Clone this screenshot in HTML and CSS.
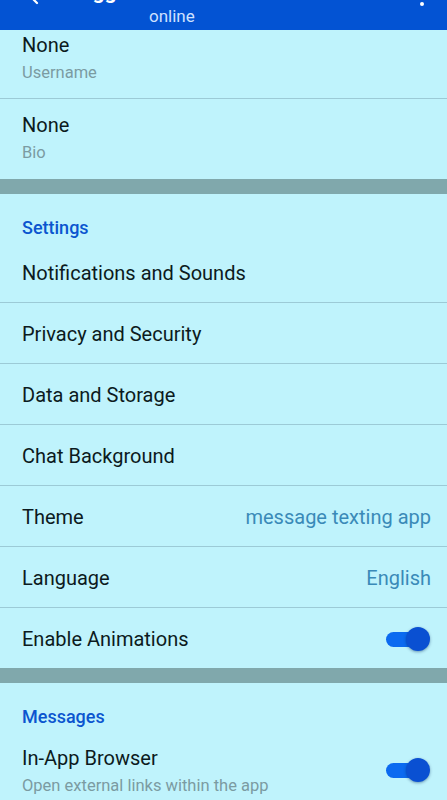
FILE: index.html
```html
<!DOCTYPE html>
<html lang="en">
<head>
<meta charset="utf-8">
<title>Settings</title>
<link rel="stylesheet" href="styles.css">
</head>
<body>
<header class="appbar">
  <div class="bar">
    <button class="icon-btn back" aria-label="Back">
      <svg width="24" height="24" viewBox="0 0 24 24"><path d="M15 4 L7 12 L15 20" fill="none" stroke="#ffffff" stroke-width="2.2" stroke-linecap="round" stroke-linejoin="round"/></svg>
    </button>
    <div class="titles">
      <div class="title">Maggie</div>
      <div class="subtitle">online</div>
    </div>
    <button class="icon-btn more" aria-label="More">
      <span class="dot"></span><span class="dot"></span><span class="dot"></span>
    </button>
  </div>
</header>

<main class="list">
  <section class="group">
    <div class="item two-line first">
      <div class="item-title">None</div>
      <div class="item-sub">Username</div>
    </div>
    <div class="item two-line last">
      <div class="item-title">None</div>
      <div class="item-sub">Bio</div>
    </div>
  </section>

  <div class="band"></div>

  <section class="group">
    <h2 class="group-title">Settings</h2>
    <div class="item"><span class="item-title">Notifications and Sounds</span></div>
    <div class="item"><span class="item-title">Privacy and Security</span></div>
    <div class="item"><span class="item-title">Data and Storage</span></div>
    <div class="item"><span class="item-title">Chat Background</span></div>
    <div class="item"><span class="item-title">Theme</span><span class="item-value">message texting app</span></div>
    <div class="item"><span class="item-title">Language</span><span class="item-value">English</span></div>
    <div class="item last"><span class="item-title">Enable Animations</span><span class="switch on"><span class="knob"></span></span></div>
  </section>

  <div class="band"></div>

  <section class="group">
    <h2 class="group-title">Messages</h2>
    <div class="item two-line with-switch last">
      <div class="texts">
        <div class="item-title">In-App Browser</div>
        <div class="item-sub">Open external links within the app</div>
      </div>
      <span class="switch on"><span class="knob"></span></span>
    </div>
  </section>
</main>
</body>
</html>
```

FILE: styles.css
```css
* { box-sizing: border-box; }
html, body {
  margin: 0;
  padding: 0;
  background: #bff3fc;
  font-family: Roboto, "Noto Sans", "Liberation Sans", sans-serif;
  color: #0c1a20;
  overflow: hidden;
}

.appbar {
  height: 30px;
  overflow: hidden;
  background: #0353d3;
}
.bar {
  height: 56px;
  margin-top: -26px;
  display: flex;
  align-items: center;
}
.icon-btn {
  border: 0;
  background: none;
  padding: 0;
  display: flex;
  align-items: center;
  justify-content: center;
}
.back {
  width: 24px;
  height: 24px;
  margin-left: 22px;
  margin-top: -14px;
}
.titles {
  flex: 1;
  display: flex;
  flex-direction: column;
  align-items: flex-start;
  padding-left: 103px;
  margin-top: 4px;
}
.title {
  color: #ffffff;
  font-size: 21px;
  font-weight: 700;
  line-height: 20px;
  margin-left: -86px;
  margin-bottom: 4px;
}
.subtitle {
  color: #cfe1ff;
  font-size: 17px;
  line-height: 20px;
}
.more {
  width: 8px;
  flex-direction: column;
  gap: 3px;
  margin-right: 21px;
  margin-top: -10px;
}
.dot {
  width: 4px;
  height: 4px;
  border-radius: 50%;
  background: #ffffff;
}

.list { display: block; }
.group { display: block; }
.group-title {
  margin: 0;
  padding: 22px 22px 2px;
  font-size: 18px;
  line-height: 24px;
  font-weight: 500;
  color: #0b55cf;
}
.item {
  height: 61px;
  padding: 1px 16px 0 22px;
  display: flex;
  align-items: center;
  justify-content: space-between;
  border-bottom: 1px solid #9ccad6;
}
.item.last { border-bottom: 0; height: 60px; }
.item-title {
  font-size: 20px;
  line-height: 26px;
  color: #0c1a20;
}
.item-value {
  font-size: 20px;
  line-height: 26px;
  color: #3a8ab8;
}
.two-line {
  height: auto;
  display: block;
  padding-top: 13px;
  padding-bottom: 15px;
}
.two-line.first { padding-top: 2px; height: 69px; }
.two-line.last { height: 80px; }
.item-sub {
  margin-top: 5px;
  font-size: 16.5px;
  line-height: 20px;
  color: #7b9ba2;
}
.with-switch {
  display: flex;
  align-items: center;
}
.with-switch .texts { flex: 1; }

.band {
  height: 15px;
  background: #80a8ac;
}

.switch {
  position: relative;
  width: 46px;
  height: 24px;
  display: inline-block;
  flex: none;
}
.switch::before {
  content: "";
  position: absolute;
  left: 1px;
  top: 5px;
  width: 40px;
  height: 15px;
  border-radius: 8px;
  background: #0b6af0;
}
.switch .knob {
  position: absolute;
  right: 1px;
  top: 0;
  width: 24px;
  height: 24px;
  border-radius: 50%;
  background: #0a50d2;
  box-shadow: 0 1px 3px rgba(0, 40, 90, 0.45);
}
```
